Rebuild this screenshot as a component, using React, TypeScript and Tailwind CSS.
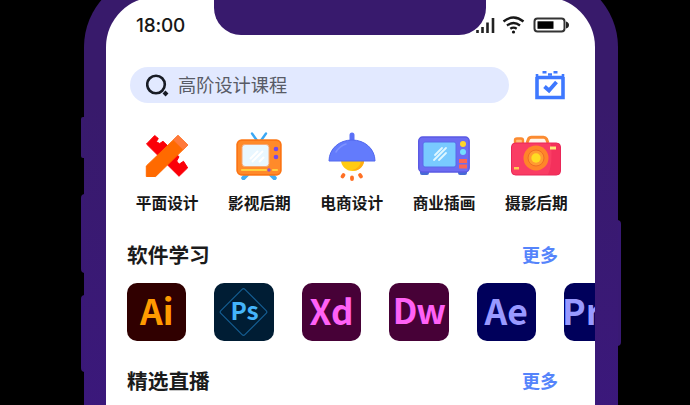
import type { ReactNode } from 'react';

const cjk = "font-['Noto_Sans_CJK_SC','Noto_Sans',sans-serif]";

const DesignIcon = () => (
  <svg width="44" height="44" viewBox="0 0 44 44" strokeLinejoin="round">
    <path
      d="M1.500 10 9.700 1.500l3.600 3-2 3.200 3.400 1.800 3.300-2.200 16 15.400-2.300 4.300 2.300 3.300 4.500-3 4.200 6.500-8.700 8.500z"
      fill="#fb0008"
      stroke="#fb0008"
    />
    <path d="M1.300 32 33 1.500 42.800 11 10.700 42.500H1.300z" fill="#ff6a00" stroke="#ff6a00" />
    <path d="m33 1.500 9.800 9.500-4.500 4.500-9.800-9.700z" fill="#ff7a3c" stroke="#ff7a3c" />
  </svg>
);

const TvIcon = () => (
  <svg width="48" height="48" viewBox="0 0 48 48">
    <path d="m17 1.500 5 7M31 1.500l-5 7" stroke="#3ba8f5" strokeWidth="2.400" strokeLinecap="round" />
    <path d="m12 42.500-3.500 3.500M36 42.500l3.500 3.500" stroke="#42adf5" strokeWidth="4.500" strokeLinecap="round" />
    <rect x="1.500" y="7.500" width="45" height="36" rx="5" fill="#ff8a2a" />
    <rect x="2.250" y="8.250" width="43.500" height="34.500" rx="4.500" fill="none" stroke="#fb7415" strokeWidth="1.500" />
    <rect x="7" y="12.500" width="27" height="22" rx="3" fill="#e9f7ff" stroke="#f4a878" />
    <path d="m15 27 8-8M17 30l11-11M24 30l5-5" stroke="#fff" strokeWidth="2" />
    <circle cx="41" cy="17" r="2.300" fill="#7549e8" />
    <circle cx="41" cy="25" r="2.300" fill="#7549e8" />
    <path d="M7 38h24M38 38h4" stroke="#ffcf40" strokeWidth="2.200" strokeLinecap="round" />
    <circle cx="34" cy="38" r="1.700" fill="#8d4ed0" />
  </svg>
);

const LampIcon = () => (
  <svg width="48" height="49" viewBox="0 0 48 49">
    <path d="M13 28h23c0 6-5 11-11.500 11S13 34 13 28z" fill="#ffcb12" />
    <path d="M33 29c-1 5-4 8-9 9 7 2 12-4 12-9z" fill="#ffad10" />
    <path d="M24 3v8" stroke="#5b70f7" strokeWidth="5" strokeLinecap="round" />
    <path d="M1 29C1 17 11 8 24 8s23 9 23 21z" fill="#637bfc" stroke="#5268ee" strokeLinejoin="round" />
    <path d="M8 20c3-5 7-7 10-8" stroke="#7d92ff" strokeWidth="1.500" strokeLinecap="round" fill="none" />
    <path d="m15.500 43-1 1.500M24 45.500V47M32 43l1 1.500" stroke="#ff7024" strokeWidth="3.800" strokeLinecap="round" />
  </svg>
);

const OvenIcon = () => (
  <svg width="52" height="41" viewBox="0 0 52 41">
    <path d="M2 35h9v2a2 2 0 0 1-2 2H4a2 2 0 0 1-2-2zM40 35h9v2a2 2 0 0 1-2 2h-5a2 2 0 0 1-2-2z" fill="#466bd4" />
    <rect x=".7" y="1" width="50.500" height="35" rx="4" fill="#6c6cf2" stroke="#5a5ae4" strokeWidth="1.400" />
    <rect x="5" y="6" width="33" height="25" rx="2" fill="#79caff" stroke="#596bea" />
    <path d="m17 19 7-7M16 24l12-12M21 24l7-7" stroke="#dff7ff" strokeWidth="1.800" strokeLinecap="round" />
    <circle cx="45" cy="8" r="3" fill="#ffd62a" />
    <circle cx="45" cy="16" r="3" fill="#74deff" />
    <path d="M41 25h8M41 30.500h8" stroke="#fa6656" strokeWidth="3.800" />
  </svg>
);

const CameraIcon = () => (
  <svg width="50" height="42" viewBox="0 0 50 42">
    <path d="M4 9V5q0-1.500 2-1.500h4q2 0 2 2V9" fill="#ffc078" stroke="#fb8b31" strokeWidth="2.400" />
    <path d="m16 8 1.500-4q.7-1.800 3-1.800h12q2 0 3 1.800L37 8" fill="#fff4e9" stroke="#fb8b31" strokeWidth="3" />
    <rect x=".5" y="8" width="49" height="32" rx="4" fill="#fa3d64" stroke="#e92758" />
    <path d="M40 8.500h6q3 0 3 4v23q0 4-4 4h-8q5-10 3-31" fill="#ed2554" opacity=".5" />
    <circle cx="25" cy="23" r="12.500" fill="#ff8529" />
    <circle cx="25" cy="23" r="8" fill="#ff9b31" stroke="#ef6e25" />
    <circle cx="25" cy="23" r="4.700" fill="#ffdc23" />
    <rect x="39" y="11.500" width="6" height="3" fill="#ffe878" />
    <rect x="3" y="32" width="5" height="2.500" fill="#ffca50" />
  </svg>
);

const categories: { label: string; icon: ReactNode }[] = [
  { label: '平面设计', icon: <DesignIcon /> },
  { label: '影视后期', icon: <TvIcon /> },
  { label: '电商设计', icon: <LampIcon /> },
  { label: '商业插画', icon: <OvenIcon /> },
  { label: '摄影后期', icon: <CameraIcon /> },
];

const apps = [
  { name: 'Ai', style: 'justify-center pb-[5px] bg-[#300000] text-[#ff9a00] text-[35.500px]' },
  { name: 'Ps', style: 'justify-center pb-[3px] pl-px bg-[#001d34] text-[#44b4fb] text-[24.500px]' },
  { name: 'Xd', style: 'justify-center pb-[5px] bg-[#470137] text-[#ff61f6] text-[35px]' },
  { name: 'Dw', style: 'justify-center pb-[5px] bg-[#470137] text-[#ff61f6] text-[34.500px] tracking-[-1.200px]' },
  { name: 'Ae', style: 'justify-center pb-[5px] bg-[#00005b] text-[#9999ff] text-[35.500px]' },
  { name: 'Pr', style: 'justify-start pb-[5px] -indent-[2px] bg-[#00005b] text-[#9999ff] text-[35.500px]' },
];

const SectionTitle = ({ children }: { children: string }) => (
  <div className="flex h-7 items-center justify-between pl-[21px] pr-[37px]">
    <h2 className="text-[20.700px] font-bold leading-7 text-[#1b1b1b]">{children}</h2>
    <span className="text-[18px] font-bold leading-7 text-[#5584fb]">更多</span>
  </div>
);

const StatusIcons = () => (
  <svg width="96" height="22" viewBox="474 14 96 22" fill="none">
    <path d="M477.500 30v3M482.500 27v6M487.500 22.500V33M493 18v15" stroke="#222" strokeWidth="2.600" />
    <path d="M503.500 21.500q10-8 20 0M507 25.500q6.500-5 13 0M510.300 28.700q3.200-2.200 6.400 0" stroke="#181818" strokeWidth="2.400" />
    <circle cx="513.500" cy="32" r="1.600" fill="#111" />
    <rect x="534.500" y="18.500" width="30" height="13" rx="3" stroke="#333" strokeWidth="2" />
    <rect x="537.500" y="21.300" width="16" height="7.500" fill="#000" />
    <path d="M566 21.500q3 1 3 3.500t-3 3.500z" fill="#222" />
  </svg>
);

export default function App() {
  return (
    <div className={`relative h-[405px] w-[690px] overflow-hidden bg-black ${cjk}`}>
      <div className="absolute left-[81px] top-[117px] h-[41px] w-2 rounded-l-xs bg-[#381a6e]" />
      <div className="absolute left-[81px] top-[194px] h-[79px] w-2 rounded-l-sm bg-[#391973]" />
      <div className="absolute left-[81px] top-[295px] h-[77px] w-2 rounded-l-sm bg-[#3a1878]" />
      <div className="absolute left-[613px] top-[220px] h-[126px] w-2 rounded-r-sm bg-[#391974]" />

      <div className="relative -mt-[25px] ml-[84px] h-[500px] w-[534px] rounded-[72px] bg-linear-to-b from-[#381a6b] from-25% to-[#3b187c] to-90% pl-[22px] pt-[22px]">
        <main className="h-[470px] w-[489px] overflow-hidden rounded-t-[50px] bg-white pt-[3px]">
          <header className="flex h-[67px] items-start justify-between pl-[30px] pr-[25px] pt-[14px]">
            <span className="font-['Inter',sans-serif] text-[19px] font-medium leading-[23px] tracking-[-0.2px] text-[#171717]">18:00</span>
            <StatusIcons />
          </header>

          <div className="flex h-9 items-center pl-6">
            <div className="flex h-9 w-[379px] items-center rounded-full bg-[#e2e9ff] pl-4">
              <svg width="23" height="23" viewBox="0 0 23 23" fill="none" stroke="#181c25">
                <circle cx="10" cy="10.500" r="8.800" strokeWidth="2.600" />
                <path d="m18 18 3 3" strokeWidth="4" />
              </svg>
              <span className="ml-[9px] -mt-0.5 text-[18.200px] leading-7 text-[#585b66]">高阶设计课程</span>
            </div>
            <svg className="ml-[26px]" width="30" height="31" viewBox="0 0 30 31" fill="none" stroke="#3e78ff">
              <path d="M2 7v20.500h26V7" strokeWidth="3.600" />
              <path d="M1 7.500h28" strokeWidth="3.600" />
              <path d="M2 4v3M28 4v3M7.500 2.200h4M18.500 2.200h4M13 4.500h4" strokeWidth="2.600" />
              <path d="m9.500 16.500 4.500 4 7.500-8.500" strokeWidth="3.800" />
            </svg>
          </div>

          <nav className="flex pl-[15px] pt-[26px]">
            {categories.map(({ label, icon }) => (
              <div key={label} className="flex w-[92.300px] shrink-0 flex-col items-center">
                <div className="flex h-[54px] items-center justify-center">{icon}</div>
                <span className="mt-2 text-[15.700px] font-bold leading-6 text-[#171717]">{label}</span>
              </div>
            ))}
          </nav>

          <section className="pt-[25px]">
            <SectionTitle>软件学习</SectionTitle>
            <div className="mt-[15px] flex gap-[28px] pl-[21px]">
              {apps.map(({ name, style }) => (
                <div key={name} className={`relative flex h-[58px] w-[59.400px] shrink-0 items-center rounded-[10px] font-bold leading-none ${style}`}>
                  {name === 'Ps' && (
                    <svg className="absolute inset-0" width="59" height="58" viewBox="0 0 59 58" fill="none">
                      <rect x="12.500" y="12" width="34" height="34" rx="2" transform="rotate(45 29.500 29)" stroke="#145d91" strokeWidth="1.200" />
                    </svg>
                  )}
                  <span className="relative">{name}</span>
                </div>
              ))}
            </div>
          </section>
          <section className="pt-[25px]">
            <SectionTitle>精选直播</SectionTitle>
          </section>
        </main>
      </div>
      <div className="absolute left-[214px] top-0 h-[34.500px] w-[272px] rounded-b-[27px] bg-[#381a6d]" />
    </div>
  );
}
